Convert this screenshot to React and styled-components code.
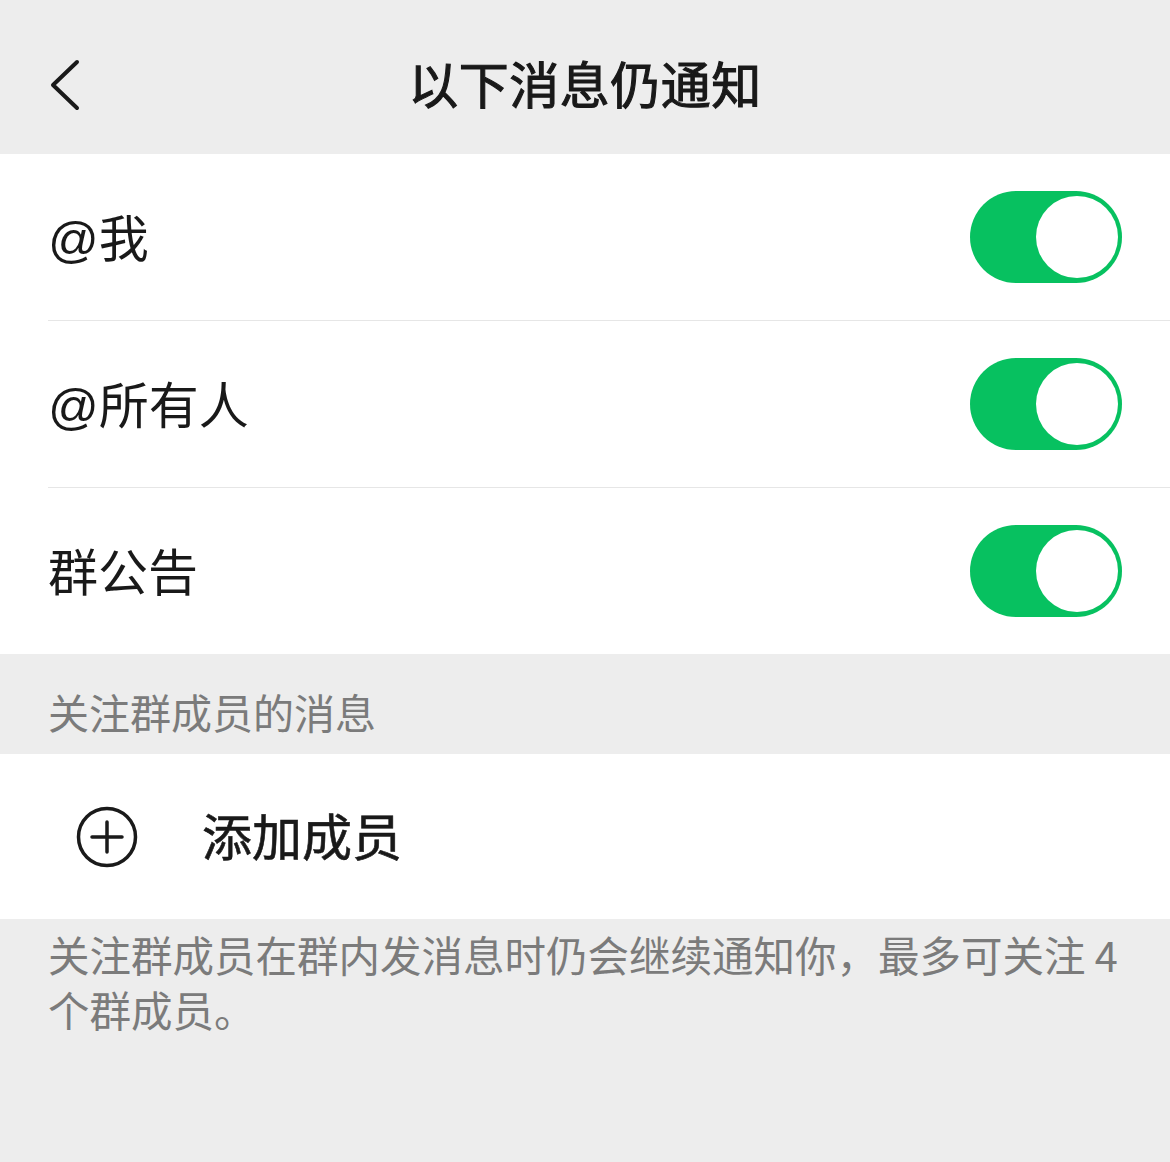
import React from 'react';
import styled, { createGlobalStyle } from 'styled-components';

const GlobalStyle = createGlobalStyle`
    html, body {
        margin: 0;
        padding: 0;
        background: #ededed;
    }
    body {
        font-family: "Noto Sans CJK SC", "Noto Sans", sans-serif;
        color: #191919;
    }
`;

const rows = [
    { id: 'me', label: '@我', on: true },
    { id: 'all', label: '@所有人', on: true },
    { id: 'notice', label: '群公告', on: true },
];

const BackIcon = () => (
    <svg width="34" height="52" viewBox="0 0 34 52" fill="none">
        <path d="M29 3 L5 26 L29 49" stroke="#1a1a1a" strokeWidth="4" strokeLinecap="round" strokeLinejoin="round" />
    </svg>
);

const PlusCircle = () => (
    <svg width="62" height="62" viewBox="0 0 62 62" fill="none">
        <circle cx="31" cy="31" r="28.5" stroke="#1a1a1a" strokeWidth="3.5" />
        <path d="M31 16 V46 M16 31 H46" stroke="#1a1a1a" strokeWidth="3.5" strokeLinecap="round" />
    </svg>
);

const App = () => {
    return (
        <Page>
            <GlobalStyle />
            <Header>
                <BackButton>
                    <BackIcon />
                </BackButton>
                <Title>以下消息仍通知</Title>
            </Header>

            <List>
                {rows.map((row) => (
                    <Row key={row.id}>
                        <Label>{row.label}</Label>
                        <Toggle $on={row.on}>
                            <Knob $on={row.on} />
                        </Toggle>
                    </Row>
                ))}
            </List>

            <SectionTitle>关注群成员的消息</SectionTitle>

            <AddRow>
                <PlusCircle />
                <AddText>添加成员</AddText>
            </AddRow>

            <Tip>关注群成员在群内发消息时仍会继续通知你，最多可关注 4 个群成员。</Tip>
        </Page>
    );
};

export default App;

const Page = styled.div`
    width: 1170px;
    min-height: 1162px;
    background: #ededed;
`;

const Header = styled.header`
    height: 154px;
    display: flex;
    align-items: center;
    justify-content: center;
    position: relative;
    background: #ededed;
`;

const BackButton = styled.div`
    position: absolute;
    left: 48px;
    top: 59px;
    display: flex;
`;

const Title = styled.h1`
    margin: 10px 0 0;
    font-size: 50px;
    font-weight: 400;
    -webkit-text-stroke: 1.1px #191919;
    letter-spacing: 0.5px;
    color: #191919;
`;

const List = styled.div`
    background: #fff;
`;

const Row = styled.div`
    height: 166px;
    margin-left: 48px;
    padding-right: 48px;
    display: flex;
    align-items: center;
    justify-content: space-between;
    &:not(:last-child) {
        border-bottom: 1.5px solid #e6e6e6;
    }
`;

const Label = styled.span`
    font-family: "Liberation Sans", "Noto Sans CJK SC", sans-serif;
    font-size: 50px;
    margin-top: -4px;
    color: #191919;
`;

const Toggle = styled.div`
    width: 152px;
    height: 92px;
    border-radius: 46px;
    background: ${(p) => (p.$on ? '#07c160' : '#e5e5e5')};
    display: flex;
    align-items: center;
    justify-content: ${(p) => (p.$on ? 'flex-end' : 'flex-start')};
    padding: 0 4px;
    box-sizing: border-box;
`;

const Knob = styled.div`
    width: 82px;
    height: 82px;
    border-radius: 50%;
    background: #fff;
`;

const SectionTitle = styled.div`
    height: 100px;
    padding: 0 48px;
    display: flex;
    align-items: flex-end;
    padding-bottom: 13px;
    box-sizing: border-box;
    font-size: 41px;
    color: #7b7b7b;
`;

const AddRow = styled.div`
    height: 165px;
    background: #fff;
    display: flex;
    align-items: center;
    padding-left: 76px;
    gap: 64px;
`;

const AddText = styled.span`
    font-size: 50px;
    font-weight: 400;
    -webkit-text-stroke: 0.6px #191919;
    margin-top: -6px;
    color: #191919;
`;

const Tip = styled.p`
    margin: 0;
    padding: 8px 48px 0;
    font-family: "Noto Sans CJK SC", sans-serif;
    font-size: 41.5px;
    line-height: 55px;
    color: #7b7b7b;
`;
